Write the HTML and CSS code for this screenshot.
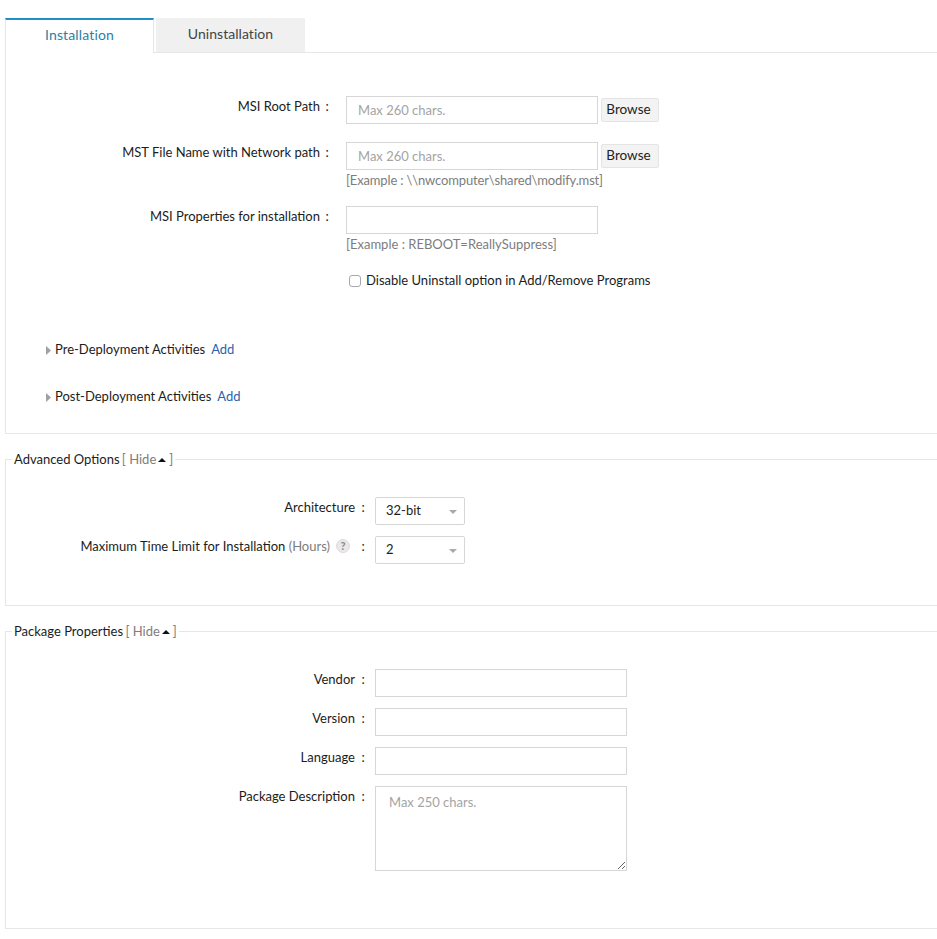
FILE: index.html
```html
<!DOCTYPE html>
<html lang="en">
  <head>
    <meta charset="utf-8" />
    <meta name="viewport" content="width=device-width, initial-scale=1" />
    <title>Installation</title>
    <link rel="stylesheet" href="styles.css">
  </head>
  <body>
    <div class="tabs">
      <div class="tab active">Installation</div>
      <div class="tab">Uninstallation</div>
    </div>
    <div class="panel">
      <div class="row first">
        <label class="name">MSI Root Path<span class="colon">:</span></label>
        <div class="field">
          <div class="pick">
            <input class="text" type="text" placeholder="Max 260 chars.">
            <button class="browse">Browse</button>
          </div>
        </div>
      </div>
      <div class="row">
        <label class="name">MST File Name with Network path<span class="colon">:</span></label>
        <div class="field">
          <div class="pick">
            <input class="text" type="text" placeholder="Max 260 chars.">
            <button class="browse">Browse</button>
          </div>
          <div class="hint path">[Example : \\nwcomputer\shared\modify.mst]</div>
        </div>
      </div>
      <div class="row">
        <label class="name">MSI Properties for installation<span class="colon">:</span></label>
        <div class="field">
          <input class="text" type="text">
          <div class="hint">[Example : REBOOT=ReallySuppress]</div>
        </div>
      </div>
      <div class="check">
        <input type="checkbox" id="noremove">
        <label for="noremove">Disable Uninstall option in Add/Remove Programs</label>
      </div>
      <div class="activity pre">
        <svg class="arrow" width="5" height="9" viewBox="0 0 5 9"><path d="M0 0L5 4.5L0 9Z" /></svg>
        <span>Pre-Deployment Activities</span>
        <a class="add">Add</a>
      </div>
      <div class="activity">
        <svg class="arrow" width="5" height="9" viewBox="0 0 5 9"><path d="M0 0L5 4.5L0 9Z" /></svg>
        <span>Post-Deployment Activities</span>
        <a class="add">Add</a>
      </div>
    </div>

    <fieldset class="group advanced">
      <legend>Advanced Options <span class="toggle">[ Hide<i class="up"></i>]</span></legend>
      <div class="row wide">
        <label class="name">Architecture<span class="colon">:</span></label>
        <div class="select">32-bit<i class="down"></i></div>
      </div>
      <div class="row wide tight">
        <label class="name">Maximum Time Limit for Installation <span class="unit">(Hours)</span><span class="help">?</span><span class="colon">:</span></label>
        <div class="select">2<i class="down"></i></div>
      </div>
    </fieldset>

    <fieldset class="group package">
      <legend>Package Properties <span class="toggle">[ Hide<i class="up"></i>]</span></legend>
      <div class="row wide">
        <label class="name">Vendor<span class="colon">:</span></label>
        <input class="text" type="text">
      </div>
      <div class="row wide tight">
        <label class="name">Version<span class="colon">:</span></label>
        <input class="text" type="text">
      </div>
      <div class="row wide tight">
        <label class="name">Language<span class="colon">:</span></label>
        <input class="text" type="text">
      </div>
      <div class="row wide tight">
        <label class="name">Package Description<span class="colon">:</span></label>
        <textarea class="text area" placeholder="Max 250 chars."></textarea>
      </div>
    </fieldset>
  </body>
</html>
```

FILE: styles.css
```css
:root {
  --line: #e6e6e6;
  --field: #d6d6d6;
  --muted: #7d7d7d;
  --hold: #a4a4a4;
}
html, body {
  overflow: hidden;
}
body {
  margin: 0;
  padding: 18px 0 0 5px;
  background: #fff;
  color: #1c1c1c;
  font-family: Lato, "Open Sans", sans-serif;
  font-size: 13px;
  line-height: 16px;
}
.tabs {
  display: flex;
  gap: 2px;
  height: 34px;
  border-bottom: 1px solid var(--line);
}
.tab {
  width: 149px;
  height: 34px;
  background: #f0f0f0;
  color: #444;
  font-size: 14px;
  line-height: 32px;
  letter-spacing: 0.05px;
  text-align: center;
}
.tab.active {
  height: 35px;
  box-sizing: border-box;
  background: #fff;
  border-top: 2px solid #1f8fc6;
  border-left: 1px solid var(--line);
  border-right: 1px solid var(--line);
  color: #2a7fa8;
  line-height: 29px;
  letter-spacing: 0.15px;
}
.panel {
  box-sizing: border-box;
  height: 381px;
  padding-top: 43px;
  border-left: 1px solid var(--line);
  border-bottom: 1px solid var(--line);
}
.row {
  display: flex;
  margin-top: 18px;
}
.row.first {
  margin-top: 0;
}
.name {
  flex: none;
  width: 325px;
  padding-top: 2px;
  text-align: right;
}
.colon {
  display: inline-block;
  width: 8px;
  margin-left: 3px;
  text-align: center;
}
.field {
  margin-left: 15px;
}
.pick {
  display: flex;
  align-items: center;
  gap: 3px;
}
.text {
  display: block;
  width: 252px;
  height: 28px;
  box-sizing: border-box;
  margin: 0;
  padding: 0 11px;
  border: 1px solid var(--field);
  outline: none;
  background: #fff;
  font-family: inherit;
  font-size: 13px;
}
.text::placeholder {
  color: var(--hold);
  opacity: 1;
}
.browse {
  width: 58px;
  height: 24px;
  margin-top: -1px;
  padding: 0 3px 2px 0;
  border: 1px solid #e4e4e4;
  border-radius: 2px;
  background: #f3f3f3;
  color: #222;
  font-family: inherit;
  font-size: 13.5px;
}
.hint {
  margin-top: 2px;
  color: var(--muted);
  font-size: 13px;
  line-height: 16px;
}
.hint.path {
  letter-spacing: -0.15px;
}
.check {
  display: flex;
  align-items: center;
  margin: 20px 0 0 343px;
}
.check input {
  appearance: none;
  width: 12px;
  height: 12px;
  margin: 1px 5px 0 0;
  border: 1px solid #a8a8a8;
  border-radius: 3px;
  background: #fff;
}
.activity {
  display: flex;
  align-items: center;
  gap: 4px;
  margin: 31px 0 0 40px;
}
.activity.pre {
  margin-top: 53px;
}
.arrow {
  fill: #a0a0a0;
  margin-top: 3px;
}
.add {
  margin-left: 2px;
  color: #2b62ad;
}
.group {
  margin: 0;
  padding: 0;
  border: 0;
  border-top: 1px solid var(--line);
  border-left: 1px solid var(--line);
  border-bottom: 1px solid var(--line);
  min-width: 0;
}
.advanced {
  margin-top: 17px;
  height: 153px;
}
.package {
  margin-top: 17px;
  height: 304px;
}
legend {
  margin-left: 6px;
  padding: 0 2px;
}
.toggle {
  margin-left: -1px;
  color: var(--muted);
}
.up {
  display: inline-block;
  margin: 0 3px 0 2px;
  vertical-align: 2px;
  border: 4px solid transparent;
  border-top: 0;
  border-bottom: 4px solid #111;
}
.row.wide {
  margin-top: 30px;
}
.row.wide.tight {
  margin-top: 11px;
}
.wide .name {
  width: 361px;
}
.wide .colon {
  margin-left: 4px;
}
.wide .text, .select {
  margin-left: 8px;
}
.select {
  position: relative;
  box-sizing: border-box;
  width: 90px;
  height: 28px;
  padding-left: 10px;
  border: 1px solid var(--field);
  border-radius: 2px;
  line-height: 25px;
}
.down {
  position: absolute;
  right: 7px;
  top: 12px;
  border: 4px solid transparent;
  border-bottom: 0;
  border-top: 4px solid #a9a9a9;
}
.unit {
  color: var(--muted);
}
.help {
  display: inline-block;
  box-sizing: border-box;
  width: 14px;
  height: 14px;
  margin: 0 5px 0 6px;
  border: 1px solid #dcdcdc;
  border-radius: 50%;
  background: #e9e9e9;
  color: #888;
  font-size: 11px;
  font-weight: 700;
  line-height: 12px;
  text-align: center;
  vertical-align: 1px;
}
.area {
  height: 85px;
  padding: 7px 13px;
}
```
